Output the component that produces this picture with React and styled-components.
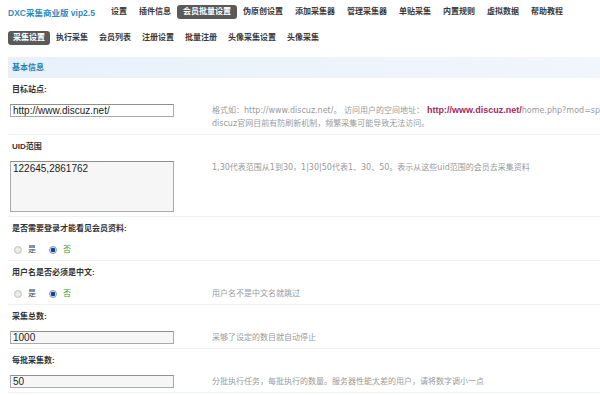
import styled, { createGlobalStyle } from 'styled-components';

const GlobalStyle = createGlobalStyle`
  body {
    margin: 0;
    background: #fff;
    overflow: hidden;
    font-family: "Liberation Sans", "Noto Sans CJK SC", sans-serif;
    font-size: 8px;
    color: #333;
  }
`;

const topMenu = [
  '设置',
  '插件信息',
  '会员批量设置',
  '伪原创设置',
  '添加采集器',
  '管理采集器',
  '单贴采集',
  '内置规则',
  '虚拟数据',
  '帮助教程',
];

const subMenu = ['采集设置', '执行采集', '会员列表', '注册设置', '批量注册', '头像采集设置', '头像采集'];

export default function App() {
  return (
    <>
      <GlobalStyle />
      <Page>
        <TopNav>
          <Brand>DXC采集商业版 vip2.5</Brand>
          {topMenu.map((item) => (
            <TopItem key={item} $active={item === '会员批量设置'}>
              {item}
            </TopItem>
          ))}
        </TopNav>
        <SubNav>
          {subMenu.map((item) => (
            <SubItem key={item} $active={item === '采集设置'}>
              {item}
            </SubItem>
          ))}
        </SubNav>

        <SectionTitle>基本信息</SectionTitle>

        <Row>
          <Label>目标站点:</Label>
          <Field>
            <Control>
              <TextInput defaultValue="http://www.discuz.net/" $white />
            </Control>
            <Desc>
              <Line>
                格式如：http://www.discuz.net/。 访问用户的空间地址：
                <LinkText>http://www.discuz.net/</LinkText>home.php?mod=space&amp;uid=1
              </Line>
              <Line>discuz官网目前有防刷新机制，频繁采集可能导致无法访问。</Line>
            </Desc>
          </Field>
        </Row>

        <Row>
          <Label>UID范围</Label>
          <Field>
            <Control>
              <TextArea defaultValue="122645,2861762" />
            </Control>
            <Desc>
              <Line>1,30代表范围从1到30，1|30|50代表1、30、50。表示从这些uid范围的会员去采集资料</Line>
            </Desc>
          </Field>
        </Row>

        <Row>
          <Label>是否需要登录才能看见会员资料:</Label>
          <Field>
            <Control>
              <RadioGroup />
            </Control>
          </Field>
        </Row>

        <Row>
          <Label>用户名是否必须是中文:</Label>
          <Field>
            <Control>
              <RadioGroup />
            </Control>
            <Desc>
              <Line>用户名不是中文名就跳过</Line>
            </Desc>
          </Field>
        </Row>

        <Row>
          <Label>采集总数:</Label>
          <Field>
            <Control>
              <TextInput defaultValue="1000" />
            </Control>
            <Desc>
              <Line>采够了设定的数目就自动停止</Line>
            </Desc>
          </Field>
        </Row>

        <Row>
          <Label>每批采集数:</Label>
          <Field>
            <Control>
              <TextInput defaultValue="50" />
            </Control>
            <Desc>
              <Line>分批执行任务，每批执行的数量。服务器性能太差的用户，请将数字调小一点</Line>
            </Desc>
          </Field>
        </Row>
      </Page>
    </>
  );
}

function RadioGroup() {
  return (
    <Radios>
      <RadioDot />
      <RadioText>是</RadioText>
      <RadioDot $checked />
      <RadioText $checked>否</RadioText>
    </Radios>
  );
}

const Page = styled.div`
  width: 600px;
  overflow: hidden;
`;

const TopNav = styled.div`
  display: flex;
  align-items: center;
  height: 24px;
  padding-left: 8px;
  white-space: nowrap;
`;

const Brand = styled.span`
  color: #2f8cbf;
  font-weight: 700;
  font-size: 8.5px;
  margin-right: 10px;
`;

const TopItem = styled.span`
  padding: 0 6px;
  height: 14px;
  line-height: 14px;
  border-radius: 3px;
  font-weight: 700;
  color: ${(p) => (p.$active ? '#fff' : '#3a3a3a')};
  background: ${(p) => (p.$active ? '#5a5a5a' : 'transparent')};
`;

const SubNav = styled.div`
  display: flex;
  align-items: center;
  gap: 1px;
  height: 28px;
  padding-left: 8px;
  white-space: nowrap;
`;

const SubItem = styled(TopItem)`
  padding: 0 5px;
`;

const SectionTitle = styled.div`
  margin: 5px 0 0 8px;
  height: 21px;
  line-height: 21px;
  padding-left: 4px;
  background: linear-gradient(to right, #e8f1fa, #f0f6fc);
  color: #2b7db3;
  font-weight: 700;
`;

const Row = styled.div`
  margin-left: 8px;
  padding: 5px 0 4px 2px;
  border-bottom: 1px solid #edf2f4;
`;

const Label = styled.div`
  height: 14px;
  line-height: 14px;
  padding-left: 2px;
  margin-bottom: 7px;
  font-weight: 700;
  color: #333;
  white-space: nowrap;
`;

const Field = styled.div`
  display: flex;
  align-items: flex-start;
`;

const Control = styled.div`
  flex: 0 0 164px;
  width: 164px;
`;

const TextInput = styled.input`
  box-sizing: border-box;
  display: block;
  width: 164px;
  height: 13px;
  margin: 0;
  padding: 0 2px;
  border: 1px solid #a9a9a9;
  border-top-color: #8e8e8e;
  background: ${(p) => (p.$white ? '#fff' : '#f6f6f6')};
  font-family: "Liberation Sans", sans-serif;
  font-size: 10px;
  color: #222;
  outline: none;
`;

const TextArea = styled.textarea`
  box-sizing: border-box;
  display: block;
  width: 164px;
  height: 51px;
  margin: 0;
  padding: 1px 2px;
  border: 1px solid #a9a9a9;
  border-top-color: #8e8e8e;
  background: #f6f6f6;
  font-family: "Liberation Sans", sans-serif;
  font-size: 10px;
  line-height: 12px;
  color: #222;
  resize: none;
  outline: none;
`;

const Desc = styled.div`
  margin-left: 38px;
  color: #9a9a9a;
  white-space: nowrap;
  font-family: "DejaVu Sans", "Noto Sans CJK SC", sans-serif;
`;

const Line = styled.div`
  line-height: 13px;
`;

const LinkText = styled.span`
  color: #a8285f;
  font-weight: 700;
  font-family: "Liberation Sans", sans-serif;
  font-size: 9px;
  margin-left: 3px;
`;

const Radios = styled.div`
  display: flex;
  align-items: center;
  height: 13px;
  padding-left: 4px;
`;

const RadioDot = styled.span`
  box-sizing: border-box;
  width: 8px;
  height: 8px;
  border-radius: 50%;
  border: 1px solid ${(p) => (p.$checked ? '#7c9cc4' : '#c4c4c4')};
  background: ${(p) =>
    p.$checked
      ? 'radial-gradient(circle, #1f3f6e 0 2px, #c9dcf2 2.5px)'
      : 'radial-gradient(circle, #f4f4f4, #dcdcdc)'};
  margin-right: 6px;
`;

const RadioText = styled.span`
  color: ${(p) => (p.$checked ? '#2ea43a' : '#444')};
  margin-right: 13px;
  line-height: 13px;
`;
